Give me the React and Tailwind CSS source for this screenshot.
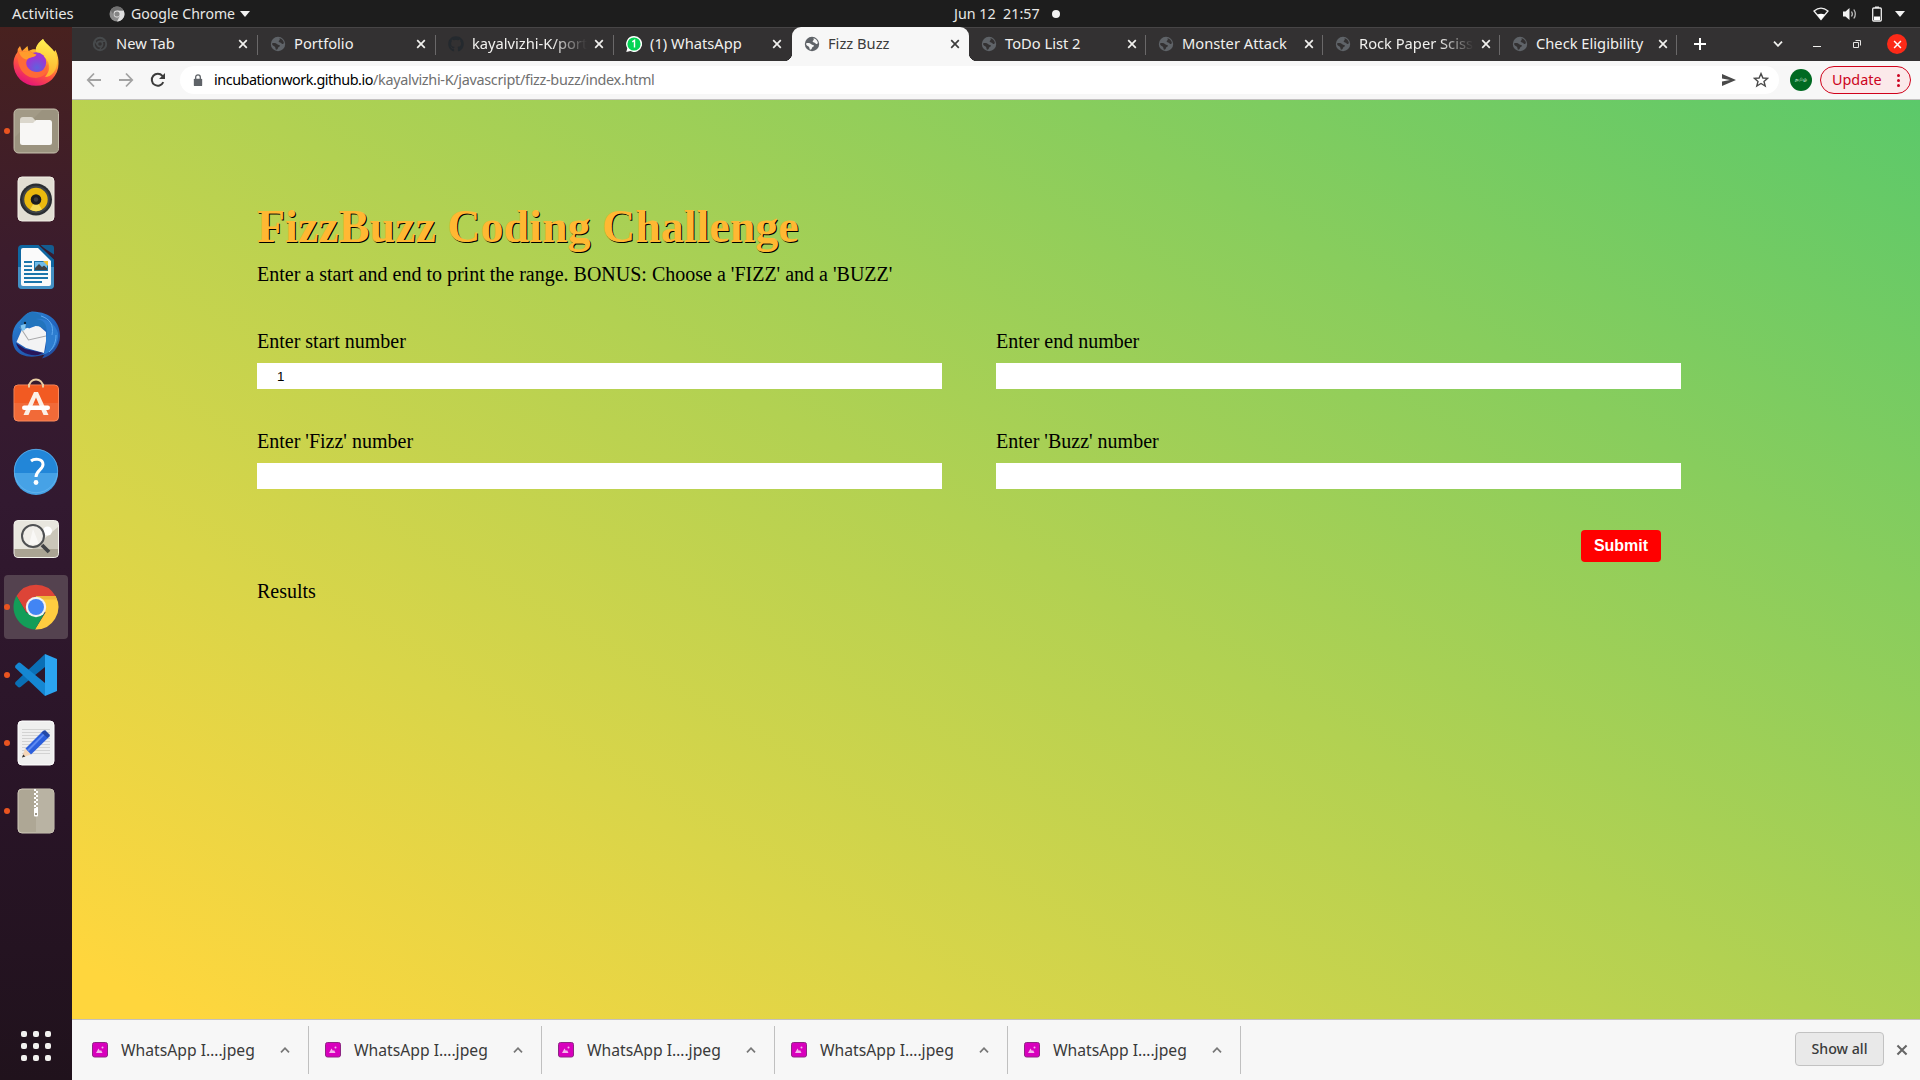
import React from "react";
import { FaGithub } from "react-icons/fa";

const tabs = [
  { title: "New Tab", icon: "chrome" },
  { title: "Portfolio", icon: "globe" },
  { title: "kayalvizhi-K/port", icon: "github", fade: true },
  { title: "(1) WhatsApp", icon: "whatsapp" },
  { title: "Fizz Buzz", icon: "globe", active: true },
  { title: "ToDo List 2", icon: "globe" },
  { title: "Monster Attack", icon: "globe" },
  { title: "Rock Paper Sciss", icon: "globe", fade: true },
  { title: "Check Eligibility", icon: "globe" },
];

function Globe() {
  return (
    <svg viewBox="0 0 16 16" className="h-4 w-4 shrink-0">
      <circle cx="8" cy="8" r="7.2" fill="#5f6368" />
      <path d="M2 7.4C4 6.6 6 7 7.2 8.2 8.4 9 9.8 8.6 10 9.8 9.8 11 8.2 10.8 8 12 7.6 13.4 7 13.8 5.8 13.6 5.4 12.4 5.6 11.2 4.6 10.4 3.4 9.8 2.2 9.2 2 7.4Z" fill="currentColor" />
      <path d="M9.4 2.2C11.6 2.4 13.6 4.4 13.9 7 13.2 8.6 12.2 8.2 11.6 7.4 10.8 6.4 9 6.6 8.6 5.6 8.4 4.6 10 4.6 9.8 3.6Z" fill="currentColor" />
    </svg>
  );
}

function Favicon({ type }) {
  if (type === "chrome")
    return (
      <svg viewBox="0 0 16 16" className="h-4 w-4 shrink-0" fill="none" stroke="#474a4c" strokeWidth="2">
        <circle cx="8" cy="8" r="6.2" />
        <circle cx="8" cy="8" r="2.6" strokeWidth="1.6" />
        <path d="M8 5.2H13.5M5.6 9.4L2.8 4.8M10.4 9.4L7.6 14" strokeWidth="1.4" />
      </svg>
    );
  if (type === "github") return <FaGithub className="h-4 w-4 shrink-0 text-[#24292e]" />;
  if (type === "whatsapp")
    return (
      <svg viewBox="0 0 16 16" className="h-4 w-4 shrink-0">
        <path d="M8 0a8 8 0 1 1-3.6 15.1L0.3 16l1-3.8A8 8 0 0 1 8 0Z" fill="#fff" />
        <circle cx="8" cy="8" r="6.6" fill="#04d455" />
        <path d="M6.3 5.8 8.5 4.3V11.6" fill="none" stroke="#fff" strokeWidth="1.4" />
      </svg>
    );
  return <Globe />;
}

function Close({ className }) {
  return (
    <svg viewBox="0 0 10 10" className={className} fill="none" stroke="currentColor" strokeWidth="1.7">
      <path d="M1.2 1.2 8.8 8.8M8.8 1.2 1.2 8.8" />
    </svg>
  );
}

function Tab({ tab, divider, wide }) {
  return (
    <div className={"relative flex h-[34px] shrink-0 items-center pl-3 " + (wide ? "w-[178px] " : "w-[177px] ") + (tab.active ? "z-10 rounded-t-[9px] bg-[#f7f7f7] text-[#3c3c3c]" : "text-[#f1f0ee]")}>
      {tab.active && (
        <>
          <span className="absolute bottom-0 -left-2 h-2 w-2 bg-[radial-gradient(circle_at_0_0,transparent_8px,#f7f7f7_8.5px)]" />
          <span className="absolute -right-2 bottom-0 h-2 w-2 bg-[radial-gradient(circle_at_100%_0,transparent_8px,#f7f7f7_8.5px)]" />
        </>
      )}
      <span className={tab.active ? "text-[#f7f7f7]" : "text-[#333132]"}>
        <Favicon type={tab.icon} />
      </span>
      <span className={"mb-[2px] ml-2 w-[115px] text-[14.7px] leading-[20px] whitespace-nowrap " + (tab.fade ? "[mask-image:linear-gradient(to_right,#000_70%,transparent_100%)]" : "")}>{tab.title}</span>
      <Close className="ml-[7px] h-[10px] w-[10px] shrink-0" />
      {divider && <span className="absolute top-2 right-0 h-5 w-px bg-[#6a6869]" />}
    </div>
  );
}

function TopBar() {
  return (
    <div className="grid h-[27px] grid-cols-3 items-center bg-[#1d1d1d] text-[14.1px] leading-[20px] text-[#e8e8e6]">
      <div className="flex items-center pl-3">
        <span className="mb-px w-[97px] text-[14.8px]">Activities</span>
        <svg viewBox="0 0 16 16" className="h-4 w-4">
          <circle cx="8" cy="8" r="7.5" fill="#8b8b8b" />
          <path d="M8 4.5h6.6A7.5 7.5 0 0 1 8 15.5L11 9.8Z" fill="#dedede" />
          <path d="M1.6 4.2A7.5 7.5 0 0 1 14.6 4.5H8L5 9.8Z" fill="#707070" />
          <circle cx="8" cy="8" r="3.4" fill="#e5e5e5" />
          <circle cx="8" cy="8" r="2.6" fill="#858585" />
        </svg>
        <span className="ml-[6px] w-[103px] whitespace-nowrap">Google Chrome</span>
        <svg viewBox="0 0 10 6" className="ml-[6px] h-[6px] w-[10px]"><path d="M0 0H10L5 6Z" fill="#f2f2f2" /></svg>
      </div>
      <div className="flex items-center pl-[314px] text-[14.3px]">
        <span className="whitespace-pre">Jun 12  21:57</span>
        <span className="ml-[12px] h-2 w-2 rounded-full bg-[#f2f2f2]" />
      </div>
      <div className="flex items-center justify-end pr-[15px]">
        <svg viewBox="0 0 16 14" className="h-[14px] w-4">
          <path d="M1 4Q8-1.8 15 4L8 12.5Z" fill="none" stroke="#eee" strokeWidth="1.3" />
          <path d="M4.2 7.5Q8 5.8 11.8 7.5L8 12.8Z" fill="#fff" />
        </svg>
        <svg viewBox="0 0 16 14" className="ml-[13px] h-[14px] w-4">
          <path d="M1 4.5H3.5L7.5 1V13L3.5 9.5H1Z" fill="#f2f2f2" />
          <path d="M9.5 4.5Q11.2 7 9.5 9.5M11.8 2.5Q14.8 7 11.8 11.5" fill="none" stroke="#bbb" strokeWidth="1.3" />
        </svg>
        <svg viewBox="0 0 12 16" className="ml-[13px] h-4 w-3">
          <path d="M4 0.5H8V2H4Z" fill="#eee" />
          <rect x="1.7" y="2" width="8.6" height="13" rx="1" fill="none" stroke="#eee" strokeWidth="1.3" />
          <path d="M3 10.5H9V14H3Z" fill="#fff" />
        </svg>
        <svg viewBox="0 0 10 6" className="ml-[12px] h-[6px] w-[10px]"><path d="M0 0H10L5 6Z" fill="#f2f2f2" /></svg>
      </div>
    </div>
  );
}

function TabStrip() {
  return (
    <div className="flex h-[34px] items-center bg-[#333132] pl-2 shadow-[inset_0_1px_0_#474546]">
      {tabs.map((t, i) => (
        <Tab key={t.title} tab={t} wide={i < 4} divider={i !== 3 && i !== 4} />
      ))}
      <svg viewBox="0 0 12 12" className="ml-[17px] h-3 w-3 text-white" stroke="currentColor" strokeWidth="2"><path d="M6 0V12M0 6H12" /></svg>
      <svg viewBox="0 0 10 6" className="ml-[67px] h-[6px] w-[10px]" fill="none" stroke="#f1f0ee" strokeWidth="1.8"><path d="M1 0.6 5 4.8 9 0.6" /></svg>
      <span className="mt-[5px] ml-[30px] h-px w-2 bg-[#f1f0ee]" />
      <svg viewBox="0 0 8 8" className="ml-[32px] h-2 w-2" fill="none" stroke="#e5e4e2"><path d="M0.5 2.5H5.5V7.5H0.5ZM2.5 0.5H7.5V5.5" strokeWidth="1" /></svg>
      <span className="ml-[26px] flex h-5 w-5 items-center justify-center rounded-full bg-[#fc2a18] text-white">
        <Close className="h-[9px] w-[9px]" />
      </span>
    </div>
  );
}

function Toolbar() {
  return (
    <div className="flex h-[39px] items-center border-b border-[#c4c2c2] bg-[#f7f7f7]">
      <svg viewBox="0 0 16 16" className="ml-[14px] h-4 w-4" fill="none" stroke="#a2a2a2" strokeWidth="1.8"><path d="M15 8H2M8 1.5 1.8 8 8 14.5" /></svg>
      <svg viewBox="0 0 16 16" className="ml-4 h-4 w-4" fill="none" stroke="#a2a2a2" strokeWidth="1.8"><path d="M1 8H14M8 1.5 14.2 8 8 14.5" /></svg>
      <svg viewBox="0 0 16 16" className="ml-4 h-4 w-4" fill="none" stroke="#3c3c3c" strokeWidth="2"><path d="M13.3 10.2A6 6 0 1 1 12.4 3.8L14 5.6" /><path d="M15 1V7H9Z" fill="#3c3c3c" stroke="none" /></svg>
      <div className="ml-[14px] flex h-7 w-[1599px] items-center rounded-full bg-white pr-[10px] pl-[13px]">
        <svg viewBox="0 0 10 14" className="h-[13px] w-[10px]"><rect x="0.5" y="5" width="9" height="8" rx="1" fill="#5f6368" /><path d="M2.5 6V3.4a2.5 2.5 0 0 1 5 0V6" fill="none" stroke="#5f6368" strokeWidth="1.4" /></svg>
        <span className="ml-[11px] text-[14.4px] leading-[20px] whitespace-nowrap text-[#707070]"><span className="tracking-[-0.46px] text-black">incubationwork.github.io</span><span className="tracking-[-0.3px]">/kayalvizhi-K/javascript/fizz-buzz/index.html</span></span>
        <svg viewBox="0 0 14 12" className="ml-auto h-3 w-[14px]"><path d="M0 0 14 6 0 12V7.4L8 6 0 4.6Z" fill="#4a4a4a" /></svg>
        <svg viewBox="0 0 16 16" className="ml-[17px] h-4 w-4" fill="none" stroke="#4a4a4a" strokeWidth="1.4"><path d="M8 1.6 9.9 6 14.6 6.3 11 9.4 12.2 14 8 11.5 3.8 14 5 9.4 1.4 6.3 6.1 6Z" /></svg>
      </div>
      <div className="ml-[11px] flex h-[22px] w-[22px] items-center justify-center rounded-full bg-[#006a22] text-[5px] font-bold text-[#b9dcc2]">தமிழ்</div>
      <div className="ml-2 flex h-7 w-[91px] items-center rounded-full border border-[#d0021b] bg-[#fbe9ea] pl-[11px] text-[14.4px] text-[#cc0320]">
        <span className="mb-px w-[54px] leading-[20px]">Update</span>
        <span className="ml-[11px] flex flex-col gap-[2px]">
          <i className="h-[3px] w-[3px] rounded-full bg-[#cc0320]" />
          <i className="h-[3px] w-[3px] rounded-full bg-[#cc0320]" />
          <i className="h-[3px] w-[3px] rounded-full bg-[#cc0320]" />
        </span>
      </div>
    </div>
  );
}

const dockIcons = [
  {
    name: "firefox",
    art: (
      <>
        <defs>
          <linearGradient id="ff1" x1="0.8" y1="0" x2="0.3" y2="1"><stop offset="0" stopColor="#fff04a" /><stop offset="0.35" stopColor="#ffb02e" /><stop offset="0.65" stopColor="#ff5340" /><stop offset="1" stopColor="#e2107c" /></linearGradient>
          <radialGradient id="ff2" cx="0.55" cy="0.75"><stop offset="0" stopColor="#5f62de" /><stop offset="1" stopColor="#9b38d4" /></radialGradient>
          <linearGradient id="ff3" x1="0.5" y1="0" x2="0.4" y2="1"><stop offset="0" stopColor="#fff252" /><stop offset="1" stopColor="#ffae2b" /></linearGradient>
        </defs>
        <path d="M31 0C34 6 39 9 42 13L43.5 11C46 16 46.8 21 46.5 25A22.5 21.8 0 0 1 1.5 25C1.5 19 3.5 16 5.5 13L5.8 10 8 7 10 12 15.5 7 16.5 12C20 10 22 10 24 10.5 25 6 28 3 31 0Z" fill="url(#ff1)" />
        <path d="M31 0C34 6 44 10 45 20 46 32 39 38 33 38 41 29 37 19 27 15 21 12 24 5 31 0Z" fill="url(#ff3)" />
        <circle cx="24" cy="23.5" r="10.2" fill="url(#ff2)" />
        <path d="M6 13 16 12C19 12 20 14.5 24.5 15.5 22 18.5 17 18 15 21 12 27 18 33 25 33 31 33 35 29 35 24 37 31 34 38 24 39 12 39 4 28 6 13Z" fill="#ff6a36" />
        <path d="M7 13 16.5 12C20 13 21 15 24.5 15.8 22 19 17 18 15 20.5 11 20 8 17 7 13Z" fill="#ff9c2c" />
      </>
    ),
  },
  {
    name: "files",
    dot: true,
    art: (
      <>
        <rect x="2" y="2" width="44.5" height="44" rx="4.5" fill="#a29a86" stroke="#c4bdab" />
        <path d="M3 30 30 3H42Q46 3 46 7V45H7Q3 45 3 42Z" fill="#938b78" opacity="0.45" />
        <path d="M8 13Q8 10 11 10H19Q21 10 22 12L24 14V20H8Z" fill="#dbd7cc" />
        <path d="M8 16H21L24 13H38Q40 13 40 15.5V35.5Q40 38 37.5 38H10.5Q8 38 8 35.5Z" fill="#f8f7f5" />
      </>
    ),
  },
  {
    name: "music",
    art: (
      <>
        <rect x="6" y="2" width="36" height="44" rx="4" fill="#e2ded3" stroke="#f1eee6" />
        <circle cx="24" cy="24.5" r="16" fill="#2a2d31" />
        <circle cx="24" cy="24.5" r="13.7" fill="#3f4449" />
        <circle cx="24" cy="24.5" r="11.7" fill="#eab90e" />
        <path d="M24 24.5 18 34.5A11.7 11.7 0 0 0 30 34.5Z" fill="#f6db56" />
        <circle cx="24" cy="24.5" r="5.3" fill="#1c1d1f" />
        <circle cx="24" cy="24.5" r="2.2" fill="#3b3c3e" />
      </>
    ),
  },
  {
    name: "writer",
    art: (
      <>
        <path d="M10 2H28L42 16V42Q42 46 38 46H10Q6 46 6 42V6Q6 2 10 2Z" fill="#0f67a1" />
        <path d="M6 24H42V42Q42 46 38 46H10Q6 46 6 42Z" fill="#4390c4" />
        <path d="M11 5H26L39 18V41Q39 43 37 43H11Q9 43 9 41V7Q9 5 11 5Z" fill="#fafafa" />
        <path d="M27 2H39Q42 2 42 5V11.5Z" fill="#145d91" />
        <path d="M27 1.5 42.5 16" stroke="#3a1b2b" strokeWidth="1.5" />
        <path d="M12 19H20M12 23.2H20M12 27H20M12 31H36M12 35H36M12 39H30" stroke="#1b75ab" strokeWidth="1.8" />
        <rect x="22" y="18" width="14" height="10" fill="#1b75ab" />
        <rect x="23" y="19" width="12" height="8" fill="#6fbbe8" />
        <path d="M31 18H36V23Z" fill="#f2c12e" />
        <path d="M23 27V25L27 21 30 24 32 22.5 35 25V27Z" fill="#404345" />
      </>
    ),
  },
  {
    name: "mail",
    art: (
      <>
        <defs><linearGradient id="tb" x1="0.2" y1="0" x2="0.8" y2="1"><stop offset="0" stopColor="#2c86d4" /><stop offset="0.5" stopColor="#2264bd" /><stop offset="1" stopColor="#214d9f" /></linearGradient></defs>
        <path d="M20 0.5C40 1 48 12 48 25 48 36 40 45 30 47.5L33 43C21 48 8 46 3 38 -1 31-1 18 6 11 10 8 13 2 20 0.5Z" fill="url(#tb)" />
        <path d="M4.5 31 12 14 17 17.5 26 14 34 21 34 30 32 42 14 37Z" fill="#f3f3f4" />
        <path d="M4 32 13 38 31 42 26 44C15 45 6 40 4 32Z" fill="#29175a" />
        <path d="M8 16 16.5 29 34 25" fill="none" stroke="#a8a8aa" strokeWidth="1.1" />
        <path d="M9 19C6 10 13 2 20 1 32 3 36 12 35 20 30 15 24 14 18 16Z" fill="#2274bd" />
        <path d="M8.5 14.5 14 12.5 13 19 10 20Z" fill="#84c6ef" />
        <circle cx="13" cy="12" r="1.2" fill="#123" />
        <path d="M24 8C34 9 36 16 34 26 34 34 35 38 31 44 42 40 47 32 46 22 43 12 34 7 24 8Z" fill="#2d7dd0" />
        <path d="M29 5C38 8 42 14 40 24M44 24C44 33 40 38 37 41" fill="none" stroke="#61aaf0" strokeWidth="1" />
      </>
    ),
  },
  {
    name: "software",
    art: (
      <>
        <path d="M17 8C17-2 31-2 31 8" fill="none" stroke="#e9cda3" strokeWidth="2" />
        <rect x="2" y="6" width="44.5" height="36" rx="4" fill="#f16a38" stroke="#f98b5f" />
        <path d="M6 6.5H42Q46 6.5 46 10V24H2.5V10Q2.5 6.5 6 6.5Z" fill="#f25a22" />
        <path d="M17 8.5V5M31 8.5V5" stroke="#e9cda3" strokeWidth="2" />
        <path d="M11.5 36 22 13H26L36.5 36H31.5L24 18.5 16.5 36Z" fill="#fbefe6" />
        <rect x="10" y="26.5" width="28" height="4.5" rx="2.2" fill="#fff" />
      </>
    ),
  },
  {
    name: "help",
    art: (
      <>
        <circle cx="24" cy="24" r="22" fill="#2286d8" />
        <path d="M2 26H46A22 22 0 0 1 2 26Z" fill="#46a2e6" />
        <circle cx="24" cy="24" r="21.7" fill="none" stroke="#6bb9ef" strokeWidth="0.7" />
        <path d="M19 14C22 11.5 31 11 31 17.5 31 22.5 24 23.5 24 30" fill="none" stroke="#fff" strokeWidth="3" />
        <circle cx="24" cy="35.5" r="2.4" fill="#fff" />
      </>
    ),
  },
  {
    name: "viewer",
    art: (
      <>
        <rect x="2" y="5.5" width="44.5" height="37" rx="4" fill="#e8e6de" stroke="#f3f2ec" />
        <path d="M46 12V34H20Z" fill="#cac6b9" />
        <circle cx="35.5" cy="16" r="4.5" fill="#fff" />
        <path d="M2.5 34H46V39Q46 42 42 42H6Q2.5 42 2.5 39Z" fill="#aaa493" />
        <circle cx="21" cy="21" r="11" fill="#f4f3ee" fillOpacity="0.65" stroke="#4f5153" strokeWidth="2" />
        <path d="M17 30 21 14 27 29Z" fill="#fff" opacity="0.6" />
        <path d="M30 30 37 37" stroke="#414345" strokeWidth="3.8" />
      </>
    ),
  },
  {
    name: "chrome",
    dot: true,
    active: true,
    art: (
      <>
        <path d="M4.5 13A22.5 22.5 0 0 1 43.5 13H24L14.5 29.5Z" fill="#dd4437" />
        <path d="M43.5 13A22.5 22.5 0 0 1 23 46.5L33.5 29.5 24 13Z" fill="#ffcd40" />
        <path d="M4.5 12.8A22.5 22.5 0 0 0 23 46.5L32.5 30H14.5Z" fill="#139d58" />
        <path d="M24 13H43.5L45 16.5H29Z" fill="#eeb83a" />
        <circle cx="24" cy="24" r="10.2" fill="#f1f1f1" />
        <circle cx="24" cy="24" r="8" fill="#4285f4" />
      </>
    ),
  },
  {
    name: "code",
    dot: true,
    art: (
      <>
        <path d="M3.5 31 33 3V16L8.5 36Q7 37 5.5 35.5L3.5 33.5Q2.5 32 3.5 31Z" fill="#0a6fb5" />
        <path d="M3.5 17 33 45V32L8.5 12Q7 11 5.5 12.5L3.5 14.5Q2.5 16 3.5 17Z" fill="#1587d2" />
        <path d="M33 3 45 8V40L33 45Z" fill="#2ba4f0" />
      </>
    ),
  },
  {
    name: "editor",
    dot: true,
    art: (
      <>
        <rect x="6" y="2" width="36" height="44" rx="4" fill="#efefef" stroke="#fff" />
        <path d="M10 10.5H38M10 13.5H38M10 16.5H38M10 19.5H38M10 22.5H38M10 25.5H38M10 28.5H38M10 31.5H38M10 34.5H38" stroke="#cfcfcf" strokeWidth="0.9" />
        <path d="M10 38.5 13 29.5 19 35.5Z" fill="#f4d5b8" />
        <path d="M10 38.5 11.2 35.5 13.4 37.4Z" fill="#333" />
        <path d="M13.5 29.5 31.5 11.5 38 17 19 35.5Z" fill="#2c5fdc" />
        <path d="M15 31 33 13 34.5 14 16.5 32.5Z" fill="#5e8af2" />
        <path d="M29.5 13.5 33 11 38 16 35.5 19Z" fill="#2449a8" />
      </>
    ),
  },
  {
    name: "archive",
    dot: true,
    art: (
      <>
        <rect x="6" y="2" width="36" height="44" rx="4" fill="#aea795" stroke="#cfc9b9" />
        <path d="M24 2.5H38Q41.5 2.5 41.5 6V42Q41.5 45.5 38 45.5H24Z" fill="#b9b3a3" />
        <path d="M23 2V23" stroke="#fff" strokeWidth="2" strokeDasharray="2 2" />
        <path d="M25 4V23" stroke="#fff" strokeWidth="2" strokeDasharray="2 2" />
        <rect x="22" y="21" width="4" height="8.5" rx="1" fill="#fff" />
        <rect x="23.2" y="26" width="1.6" height="2" fill="#88816f" />
      </>
    ),
  },
];

function Dock() {
  return (
    <div className="flex w-[72px] shrink-0 flex-col items-center gap-1 bg-[linear-gradient(to_bottom,#48211f_0%,#3b1c2d_22%,#321930_45%,#281426_75%,#20121c_100%)] pt-1">
      {dockIcons.map((d) => (
        <div key={d.name} className={"relative flex h-16 w-16 shrink-0 items-center justify-center rounded-[4px] " + (d.active ? "bg-[#54424f]" : "")}>
          {d.dot && <span className="absolute top-[29px] left-0 h-[6px] w-[6px] rounded-full bg-[#e95420]" />}
          <svg viewBox="0 0 48 48" className="h-12 w-12 overflow-visible">{d.art}</svg>
        </div>
      ))}
      <div className="mt-auto mb-[19px] grid grid-cols-3 gap-[6px]">
        {Array.from({ length: 9 }, (_, i) => (
          <span key={i} className="h-[6px] w-[6px] rounded-[2px] bg-[#f2f1ef]" />
        ))}
      </div>
    </div>
  );
}

function Field({ label, value }) {
  return (
    <label className="flex h-[100px] w-[685px] flex-col">
      <span className="text-[20px] leading-[23px]">{label}</span>
      <input readOnly value={value} className="mt-[10px] h-[26px] w-full bg-white px-5 font-['Liberation_Sans'] text-[13.33px] text-black outline-none" />
    </label>
  );
}

function Page() {
  return (
    <main className="h-[919px] bg-[linear-gradient(30deg,#ffd63d_3%,#d9d549_27%,#b2d152,#88cd5d_75%,#5bc96a)] px-[185px] pt-[100px] font-['Liberation_Serif',serif] text-black">
      <h1 className="text-[46px] leading-[53px] font-bold whitespace-nowrap text-[#ffb833] [text-shadow:1px_1px_0_#000]">FizzBuzz Coding Challenge</h1>
      <p className="mt-[10px] text-[20px] leading-[23px]">Enter a start and end to print the range. BONUS: Choose a 'FIZZ' and a 'BUZZ'</p>
      <div className="mt-11 grid w-[1424px] grid-cols-[685px_685px] justify-between">
        <Field label="Enter start number" value="1" />
        <Field label="Enter end number" value="" />
        <Field label="Enter 'Fizz' number" value="" />
        <Field label="Enter 'Buzz' number" value="" />
      </div>
      <div className="flex w-[1404px] justify-end">
        <button className="h-8 w-20 rounded-[4px] bg-[#ff0000] font-['Liberation_Sans'] text-[16px] font-bold text-white">Submit</button>
      </div>
      <p className="mt-[18px] text-[20px] leading-[23px]">Results</p>
    </main>
  );
}

function Downloads() {
  return (
    <div className="flex h-[61px] items-center border-t border-[#c2c0c0] bg-[#f7f7f7] text-[#3a3a3a]">
      {[0, 1, 2, 3, 4].map((i) => (
        <div key={i} className="flex h-12 w-[233px] items-center border-r border-[#c0c0c0] pl-4 first:w-[237px] first:pl-5">
          <svg viewBox="0 0 16 16" className="mb-px h-4 w-4">
            <rect x="0.5" y="0.5" width="15" height="14.5" rx="2" fill="#d800bd" stroke="#8d2783" />
            <path d="M4 11 6.5 6.5 8 9 9 8 10.5 11Z" fill="#f4b6ec" />
            <circle cx="10.5" cy="5.5" r="1" fill="#f4b6ec" />
          </svg>
          <span className="mt-px ml-[13px] w-[140px] text-[15.7px] whitespace-nowrap">WhatsApp I….jpeg</span>
          <svg viewBox="0 0 10 6" className="ml-[19px] h-[6px] w-[10px]" fill="none" stroke="#777" strokeWidth="1.7"><path d="M1 5.4 5 1.2 9 5.4" /></svg>
        </div>
      ))}
      <div className="mb-[2px] ml-auto flex h-[34px] w-[89px] items-center justify-center rounded-[4px] border border-[#c2c2c2] bg-[#e9e9e9] text-[14.2px] font-medium">Show all</div>
      <Close className="mr-[12px] mb-px ml-[12px] h-3 w-3 text-[#666]" />
    </div>
  );
}

export default function App() {
  return (
    <div className="h-[1080px] w-[1920px] overflow-hidden font-['Noto_Sans',sans-serif]">
      <TopBar />
      <div className="flex h-[1053px]">
        <Dock />
        <div className="flex w-[1848px] flex-col">
          <TabStrip />
          <Toolbar />
          <Page />
          <Downloads />
        </div>
      </div>
    </div>
  );
}
